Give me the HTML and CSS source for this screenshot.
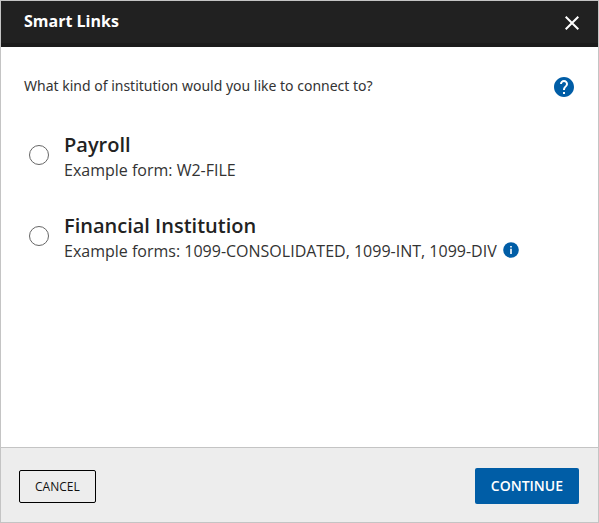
FILE: index.html
```html
<!DOCTYPE html>
<html lang="en">
<head>
<meta charset="utf-8">
<title>Smart Links</title>
<link rel="stylesheet" href="styles.css">
</head>
<body>
<form class="dialog" role="dialog" aria-labelledby="dialog-title">
  <header class="dialog-header">
    <h1 class="dialog-title" id="dialog-title">Smart Links</h1>
    <button class="icon-button close-button" type="button" aria-label="Close">
      <svg width="14" height="14" viewBox="0 0 14 14" aria-hidden="true"><path d="M.7 .7L13.300 13.300M13.300 .7L.7 13.300" stroke="#fff" stroke-width="2" fill="none"/></svg>
    </button>
  </header>
  <main class="dialog-body">
    <div class="question-row">
      <p class="question" id="question">What kind of institution would you like to connect to?</p>
      <button class="icon-button" type="button" aria-label="Help">
        <svg width="20" height="20" viewBox="2 2 20 20" aria-hidden="true"><path fill="#005da6" d="M12 2C6.480 2 2 6.480 2 12s4.480 10 10 10 10-4.480 10-10S17.520 2 12 2zm1 17h-2v-2h2v2zm2.070-7.750l-.9.920C13.450 12.900 13 13.500 13 15h-2v-.5c0-1.100.45-2.100 1.170-2.830l1.240-1.260c.37-.36.59-.86.59-1.410 0-1.100-.9-2-2-2s-2 .9-2 2H8c0-2.210 1.790-4 4-4s4 1.790 4 4c0 .88-.36 1.680-.93 2.250z"/></svg>
      </button>
    </div>
    <div class="options" role="radiogroup" aria-labelledby="question">
      <div class="option">
        <input class="radio" type="radio" name="institution" id="payroll">
        <label class="option-label" for="payroll">
          <span class="option-title">Payroll</span>
          <span class="option-example">Example form: W2-FILE</span>
        </label>
      </div>
      <div class="option">
        <input class="radio" type="radio" name="institution" id="financial">
        <label class="option-label" for="financial">
          <span class="option-title">Financial Institution</span>
          <span class="option-example">Example forms: 1099-CONSOLIDATED, 1099-INT, 1099-DIV
            <svg class="info" width="16" height="16" viewBox="0 0 16 16" aria-hidden="true"><circle cx="8" cy="8" r="7.800" fill="#005da6"/><path fill="#fff" d="M7.200 4h1.600v1.600H7.200zM7.200 6.800h1.600V12H7.200z"/></svg>
          </span>
        </label>
      </div>
    </div>
  </main>
  <footer class="dialog-footer">
    <button class="button button-secondary" type="button">CANCEL</button>
    <button class="button button-primary" type="submit">CONTINUE</button>
  </footer>
</form>
</body>
</html>
```
FILE: styles.css
```css
* {
  box-sizing: border-box;
}

body {
  margin: 0;
  color: #222;
  font-family: "Open Sans", "Noto Sans", sans-serif;
}

.dialog {
  display: flex;
  flex-direction: column;
  min-height: 100vh;
  border: 1px solid #c4c4c4;
  background: #fff;
}

.dialog-header {
  display: flex;
  align-items: flex-start;
  justify-content: space-between;
  padding: 8px 19px 6px 23px;
  border-bottom: 4px solid #1b1b1b;
  background: #212121;
  color: #fff;
}

.dialog-title {
  margin: 0;
  font-size: 16px;
  line-height: 24px;
  font-weight: 700;
}

.icon-button {
  display: flex;
  align-items: center;
  padding: 0;
  border: 0;
  background: none;
}

.close-button {
  height: 28px;
}

.dialog-body {
  flex: 1;
  padding: 30px 24px 24px 23px;
}

.question-row {
  display: flex;
  align-items: flex-start;
  justify-content: space-between;
}

.question {
  margin: 0;
  color: #333;
  font-family: "Noto Sans", "Open Sans", sans-serif;
  font-size: 14px;
  line-height: 18px;
}

.options {
  display: flex;
  flex-direction: column;
  gap: 31px;
  margin-top: 33px;
}

.option {
  display: flex;
  align-items: center;
  gap: 15px;
  padding-left: 5px;
}

.radio {
  appearance: none;
  width: 20px;
  height: 20px;
  margin: 0;
  border: 1px solid #666;
  border-radius: 50%;
  background: #fff;
}

.option-title,
.option-example {
  display: block;
}

.option-title {
  font-size: 20px;
  line-height: 30px;
  font-weight: 600;
}

.option-example {
  color: #333;
  font-size: 16px;
  line-height: 20px;
}

.info {
  margin-left: 2px;
  vertical-align: -1px;
}

.dialog-footer {
  display: flex;
  align-items: center;
  justify-content: space-between;
  padding: 20px 19px 18px 18px;
  border-top: 1px solid #c4c4c4;
  background: #ededed;
}

.button {
  border-radius: 2px;
  font-family: inherit;
}

.button-secondary {
  height: 33px;
  padding: 0 15px;
  border: 1px solid #000;
  background: none;
  color: #111;
  font-size: 12px;
}

.button-primary {
  height: 36px;
  padding: 0 16px 2px;
  border: 0;
  background: #005da6;
  color: #fff;
  font-size: 14px;
  font-weight: 600;
}
```
